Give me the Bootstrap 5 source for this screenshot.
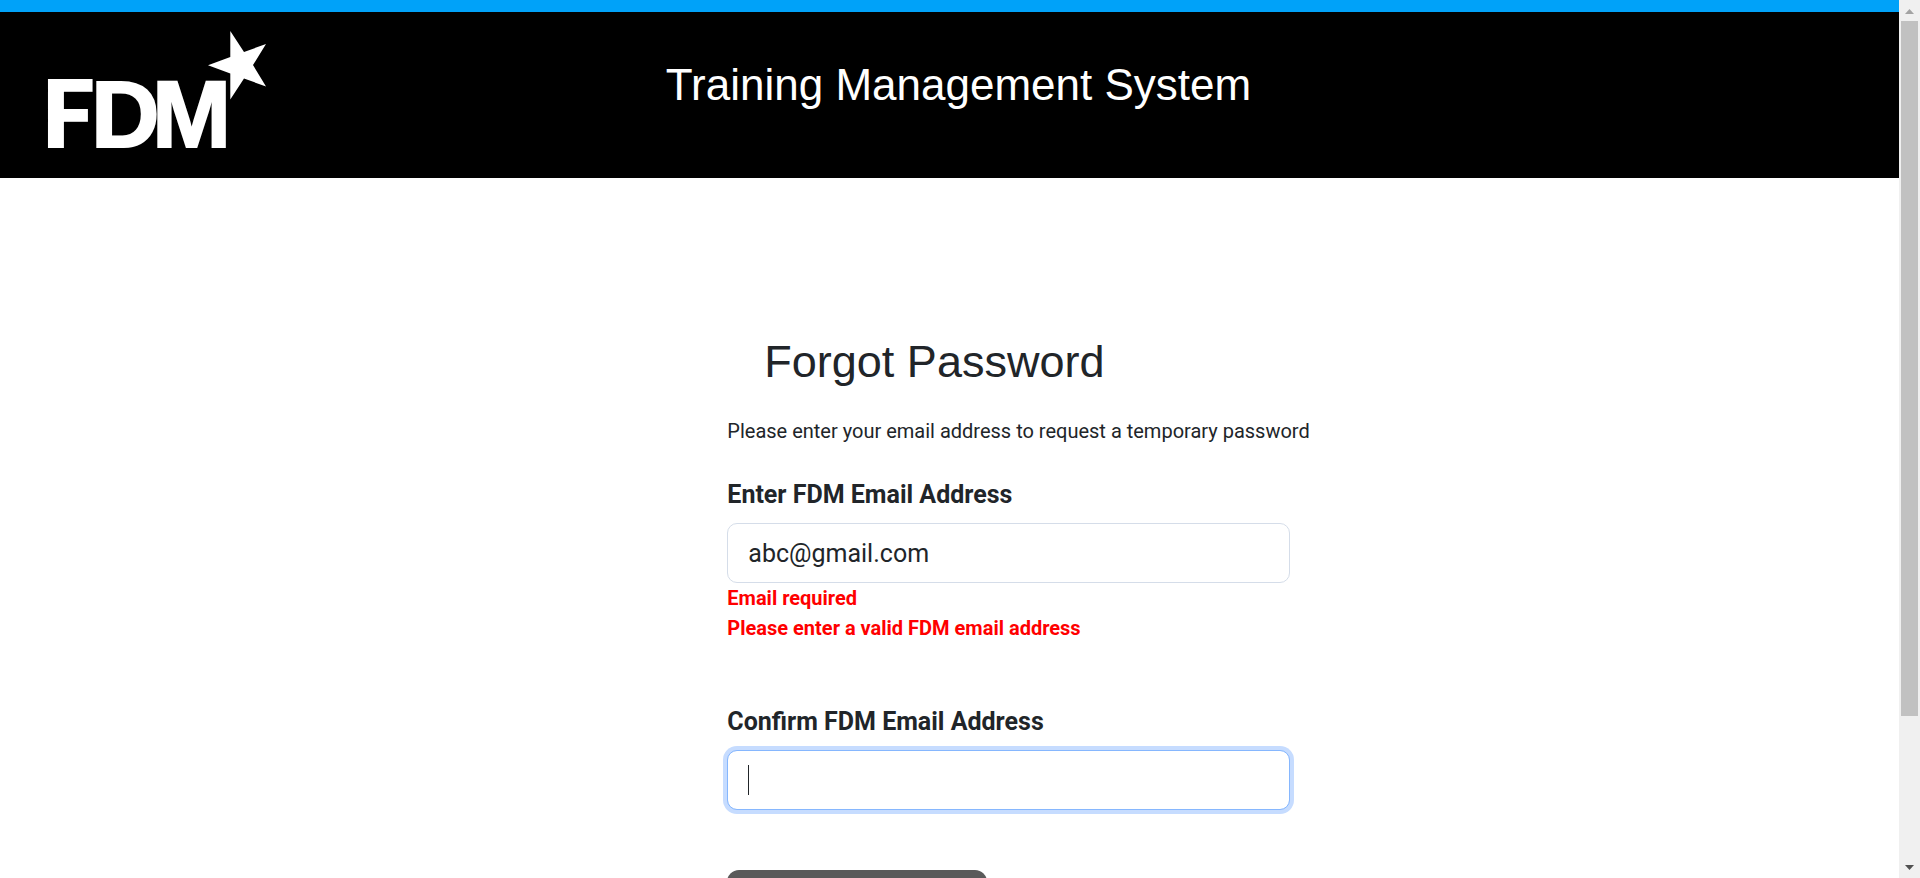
<!DOCTYPE html>
<html lang="en">
<head>
<meta charset="utf-8">
<meta name="viewport" content="width=device-width, initial-scale=1">
<title>Forgot Password</title>
<link href="https://cdn.jsdelivr.net/npm/bootstrap@5.3.0/dist/css/bootstrap.min.css" rel="stylesheet">
<style>
body { font-family: Roboto, sans-serif; font-size: 20px; line-height: 30px; color: #212529; background: #fff; }
h1, h2 { font-family: "Liberation Sans", Arial, sans-serif; font-weight: 400; font-size: 45px; line-height: 54px; }
.site-head { background: #000; border-top: 12px solid #00a2f9; height: 178px; padding-left: 38px; }
.site-title { font-size: 44px; padding: 46px 0 0 18px; }
.brand-logo { width: 240px; height: 158px; }
.brand-logo text { font-family: "Liberation Sans", Arial, sans-serif; font-weight: 700; font-size: 95px; fill: #fff; stroke: #fff; stroke-width: 2; }
.brand-logo .narrow { font-family: Lato, sans-serif; font-weight: 900; font-size: 92px; }
.reset-form { margin-left: 38.3%; padding-top: 157px; width: 563px; max-width: 60%; }
.reset-form h2 { padding-left: 37px; margin-bottom: 27px; }
.intro { margin-bottom: 30px; }
.form-label { font-size: 25px; line-height: 38px; margin-bottom: 9px; }
.form-control { height: 60px; padding: 0 20px; font-size: 25px; border-color: #d5dde9; border-radius: 10px; color: #212529; }
.form-control:focus { border-color: #86b7fe; box-shadow: 0 0 0 4px #c6dcff; caret-color: transparent; }
.caret { top: 15px; left: 21px; width: 1px; height: 30px; background: #212529; }
.form-error { color: #f00; }
.field-first { margin-bottom: 60px; }
.field-last { margin-bottom: 60px; }
.btn-reset { width: 260px; height: 60px; font-size: 25px; color: #fff; background: #5a5a5a; border: 0; border-radius: 12px; }
.scroll-rail { width: 21px; background: #f0f0f0; padding: 9px 2px 8px; }
.scroll-thumb { height: 80.7%; margin-top: 7px; background: #c1c1c1; }
</style>
</head>
<body class="vh-100 overflow-hidden d-flex">
<div class="flex-grow-1 overflow-hidden">
  <header class="site-head position-relative">
    <a href="#" aria-label="FDM home">
      <svg class="brand-logo d-block" viewBox="38 12 240 158" aria-hidden="true">
        <text x="42" y="146.500" class="narrow">F</text><text x="91" y="146.500">D</text><text x="152" y="146.500">M</text>
        <path fill="#fff" d="M230.300 31L244 52L266 44L253 65L266 86.500L244 78.500L230.300 99.500V73.500L208 65.300L230.300 57Z"/>
      </svg>
    </a>
    <h1 class="site-title position-absolute start-0 end-0 top-0 mb-0 text-center text-white pe-none">Training Management System</h1>
  </header>
  <main>
    <form class="reset-form text-nowrap">
      <h2>Forgot Password</h2>
      <p class="intro">Please enter your email address to request a temporary password</p>
      <div class="field-first">
        <label class="form-label fw-bold d-block" for="email">Enter FDM Email Address</label>
        <input class="form-control" type="email" id="email" value="abc@gmail.com">
        <div class="form-error fw-bold">Email required</div>
        <div class="form-error fw-bold">Please enter a valid FDM email address</div>
      </div>
      <div class="field-last">
        <label class="form-label fw-bold d-block" for="confirm">Confirm FDM Email Address</label>
        <div class="position-relative">
          <input class="form-control" type="email" id="confirm" autofocus>
          <span class="caret position-absolute"></span>
        </div>
      </div>
      <button class="btn btn-reset" type="submit">Request Password</button>
    </form>
  </main>
</div>
<div class="scroll-rail flex-shrink-0 d-flex flex-column" aria-hidden="true">
  <svg class="mx-auto flex-shrink-0" width="9" height="5"><path d="M0 5L4.500 0L9 5Z" fill="#a3a3a3"/></svg>
  <div class="scroll-thumb"></div>
  <svg class="mx-auto mt-auto flex-shrink-0" width="9" height="5"><path d="M0 0L4.500 5L9 0Z" fill="#505050"/></svg>
</div>
<script src="https://cdn.jsdelivr.net/npm/bootstrap@5.3.0/dist/js/bootstrap.bundle.min.js"></script>
</body>
</html>
